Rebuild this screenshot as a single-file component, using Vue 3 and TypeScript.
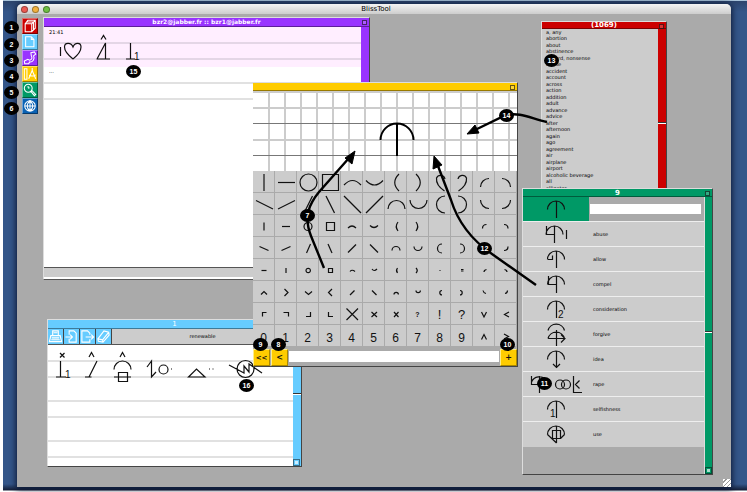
<script setup lang="ts">
interface Key { d?: string; text?: string; size?: string; name: string }
interface Result { word: string; d: string; digit?: string; dx?: number; dy?: number }
interface Badge { n: number; x: number; y: number }

const words: string[] = [
  'a, any', 'abortion', 'about', 'abstinence', 'absurd, nonsense', 'abuse', 'accident', 'account', 'across',
  'action', 'addition', 'adult', 'advance', 'advice', 'after', 'afternoon', 'again', 'ago', 'agreement', 'air',
  'airplane', 'airport', 'alcoholic beverage', 'all', 'alligator',
]

const cap = 'M24.5 12.5A8.5 8.5 0 0 1 41.5 12.5'
const stem = 'M33.5 4V21'
const results: Result[] = [
  { word: 'abuse', d: 'M23 12.5A8.5 8.5 0 0 1 40 12.5M31.5 4V21M23.5 4V12.5H31.5M43.5 8V17' },
  { word: 'allow', d: `${cap}${stem}M25 12.5H29.5V8.5` },
  { word: 'compel', d: `${cap}${stem}M25.5 4V12.5H33.5` },
  { word: 'consideration', d: `${cap}${stem}`, digit: '2', dx: 35, dy: 21 },
  { word: 'forgive', d: 'M25 8.5A8.5 8.5 0 0 1 41.5 8.5M25 16.5A8.5 8.5 0 0 1 41.5 16.5H25M33.5 8V24M38 12.5L42 16.5L38 20.5' },
  { word: 'idea', d: `${cap}${stem}M30 17L33.5 20.5L37 17` },
  { word: 'rape', d: 'M8.5 4V12.5H16.5M8.5 10A8.5 8.5 0 0 1 23 8M16.5 4V21M32.5 12.5a4.5 4.5 0 1 0 9 0a4.5 4.5 0 1 0 -9 0M38.5 12.5a4.5 4.5 0 1 0 9 0a4.5 4.5 0 1 0 -9 0M50.5 4V20.5H59M56.5 8.5L52.5 12.5L56.5 16.5' },
  { word: 'selfishness', d: `${cap}${stem}`, digit: '1', dx: 27, dy: 20 },
  { word: 'use', d: `${cap}${stem}M29.5 8.5H37.5V16.5H29.5ZM24.5 12.5L33.5 21M41.5 12.5L37.5 16.5` },
]

const g = (name: string, d: string): Key => ({ name, d })
const t = (text: string, size = 'mid'): Key => ({ name: text, text, size })
const blank = (name: string): Key => ({ name })

const keys: Key[] = [
  g('vertical', 'M11 3V20'), g('horizontal', 'M3 11.5H20'), g('circle', 'M3 11.5a8.5 8.5 0 1 0 17 0a8.5 8.5 0 1 0 -17 0'),
  g('square', 'M3.5 3.5H19.5V19.5H3.5Z'), g('arch', 'M3 14Q11.5 5 20 14'), g('dip', 'M3 9.5Q11.5 18.5 20 9.5'),
  g('left bow', 'M14 3Q5.5 11.5 14 20'), g('right bow', 'M9 3Q17.5 11.5 9 20'),
  g('left ear', 'M16 8A4.5 4.5 0 0 0 7.5 7C7 12 11 17 15.5 20'), g('right ear', 'M7 8A4.5 4.5 0 0 1 15.5 7C16 12 12 17 7.5 20'),
  g('top left quarter', 'M7.5 16A8.5 8.5 0 0 1 16 7.5'), g('top right quarter', 'M7 7.5A8.5 8.5 0 0 1 15.5 16'),

  g('shallow fall', 'M3 7.5L20 16'), g('shallow rise', 'M3 16L20 7.5'), g('steep rise', 'M7 20L15.5 3'), g('steep fall', 'M7 3L15.5 20'),
  g('fall', 'M3 3L20 20'), g('rise', 'M3 20L20 3'), g('upper half', 'M3 16A8.5 8.5 0 0 1 20 16'), g('lower half', 'M3 7A8.5 8.5 0 0 0 20 7'),
  g('left half', 'M16 3A8.5 8.5 0 0 0 16 20'), g('right half', 'M7 3A8.5 8.5 0 0 1 7 20'),
  g('bottom left quarter', 'M7.5 7A8.5 8.5 0 0 0 16 15.5'), g('bottom right quarter', 'M15.5 7A8.5 8.5 0 0 1 7 15.5'),

  g('half vertical', 'M11 7.5V15.5'), g('half horizontal', 'M7 11.5H15'), g('half circle size', 'M7 11.5a4 4 0 1 0 8 0a4 4 0 1 0 -8 0'),
  g('half square', 'M7.5 7.5H15.5V15.5H7.5Z'), g('half arch', 'M7 13Q11 9 15 13'), g('half dip', 'M7 10.5Q11 14.5 15 10.5'),
  g('half left bow', 'M13 7Q9.5 11.5 13 16'), g('half right bow', 'M9 7Q12.5 11.5 9 16'), blank('spare one'), blank('spare two'),
  g('half top left', 'M9.5 13.5Q9.5 9.5 13.5 9.5'), g('half top right', 'M9 9.5Q13 9.5 13 13.5'),

  g('half shallow fall', 'M6.5 9.5L15.5 13.5'), g('half shallow rise', 'M6.5 13.5L15.5 9.5'), g('half steep rise', 'M9.5 16L13.5 7'),
  g('half steep fall', 'M9 7L13 16'), g('half rise', 'M7 15.5L15 7.5'), g('half fall', 'M7 7.5L15 15.5'),
  g('small upper half', 'M7 13.5A4 4 0 0 1 15 13.5'), g('small lower half', 'M7 9.5A4 4 0 0 0 15 9.5'),
  g('small left half', 'M13 7A4.5 4.5 0 0 0 13 16'), g('small right half', 'M9 7A4.5 4.5 0 0 1 9 16'),
  g('half bottom left', 'M9.5 9.5Q9.5 13.5 13.5 13.5'), g('half bottom right', 'M13 9.5Q13 13.5 9 13.5'),

  g('dash', 'M8.5 11.5H13.5'), g('tick', 'M11 9V14'), g('ring', 'M9 11.5a2.2 2.2 0 1 0 4.4 0a2.2 2.2 0 1 0 -4.4 0'),
  g('box', 'M9.5 9.5H13.5V13.5H9.5Z'), g('tiny arch', 'M9 12.5Q11 10 14 12.5'), g('tiny dip', 'M9 10Q11 13 14 10'),
  g('tiny left bow', 'M12.5 9Q10.5 11.5 12.5 14'), g('tiny right bow', 'M9 9Q11.5 11.5 9 14'), g('dot', 'M10.5 11.5H11.5'),
  g('big dot', 'M10 10.5H12.5M10 12H12.5'), g('tiny top left', 'M11 13Q11 11 13.5 10.5'), g('tiny top right', 'M9.5 10.5Q12 11 12 13'),

  g('caret up', 'M8 13.5L11 10.5L14 13.5'), g('caret right', 'M9.5 8L13 11.5L9.5 15'), g('caret down', 'M8 10.5L11.5 13.5L15 10.5'),
  g('caret left', 'M13 8L9.5 11.5L13 15'), g('tiny rise', 'M9 14L13.5 9.5'), g('tiny fall', 'M9 9.5L13.5 14'),
  g('mini upper half', 'M9 13.5A2.2 2.2 0 0 1 13.4 13.5'), g('mini lower half', 'M9 9.5A2.2 2.2 0 0 0 13.4 9.5'),
  g('mini left half', 'M13 9.5A2.2 2.2 0 0 0 13 13.9'), g('mini right half', 'M9 9.5A2.2 2.2 0 0 1 9 13.9'),
  g('mini bottom left', 'M10 9.5Q10.5 12 13 12.5'), g('mini bottom right', 'M12.5 9.5Q12.5 12 10 12.5'),

  g('corner top left', 'M9.5 13.5V9.5H13.5'), g('corner top right', 'M8.5 9.5H13.5V13.5'), g('corner bottom right', 'M13.5 9V13.5H9'),
  g('corner bottom left', 'M9.5 9V13.5H14'), g('big cross', 'M5.5 5.5L17 17M17 5.5L5.5 17'), g('cross', 'M8.5 9L14 14M14 9L8.5 14'),
  g('small cross', 'M9 9L13.5 14M13.5 9L9 14'), t('?', 'small'), t('!', 'big'), t('?', 'big'), g('v', 'M8.5 9L11 14L13.5 9'), g('less', 'M14 9L9.5 11.5L14 14'),

  ...'0123456789'.split('').map((c) => t(c)), g('up', 'M8.5 14.5L11 9.500L13.5 14.5'), g('greater', 'M9 9L13.5 11.500L9 14'),
]

const badges: Badge[] = [
  { n: 1, x: 12, y: 27 }, { n: 2, x: 12, y: 44 }, { n: 3, x: 12, y: 60 }, { n: 4, x: 12, y: 76 },
  { n: 5, x: 12, y: 92 }, { n: 6, x: 12, y: 108 }, { n: 7, x: 308, y: 215 }, { n: 8, x: 279, y: 344 },
  { n: 9, x: 261, y: 344 }, { n: 10, x: 508, y: 344 }, { n: 11, x: 545, y: 383 }, { n: 12, x: 485, y: 248 },
  { n: 13, x: 552, y: 60 }, { n: 14, x: 507, y: 115 }, { n: 15, x: 134, y: 71 }, { n: 16, x: 247, y: 385 },
]

const columns = Array.from({ length: 16 }, (_, i) => 268 + i * 16)
</script>

<template>
  <div class="desktop">
    <main class="app">
      <header class="bar">
        <span class="lights"><i class="red"></i><i class="amber"></i><i class="lime"></i></span>
        <h1>BlissTool</h1>
      </header>
      <nav class="tools">
        <button class="t-red" aria-label="Dictionary"><svg viewBox="0 0 16 16"><path d="M2.5 5.5H10V14.5H2.500ZM2.5 5.5L5.5 1.500H14V10.500L10 14.5M10 5.5L14 1.5M4 3.5H12V12.500" /></svg></button>
        <button class="t-sky" aria-label="Document"><svg viewBox="0 0 16 16"><path d="M3 2H9.5L12.5 5V13.5H3ZM9.5 2V5H12.5" /></svg></button>
        <button class="t-purple" aria-label="Call"><svg viewBox="0 0 16 16"><path d="M9 2L13 1L14.5 3.5L12 5.5C14 9 11 13 7.500 12.500L6.500 14.5L2 14.500L1.5 11.500L5.5 9.500L7.500 10.500C10 10 11 8 9.500 5.500Z" /></svg></button>
        <button class="t-gold" aria-label="Drawing"><svg viewBox="0 0 16 16"><path d="M1.500 2H4.5V14H1.5ZM10.500 1V4M10.5 4L6.5 13.5M10.5 4L14.5 13.5M7 9.500Q11 11.500 14.500 9" /></svg></button>
        <button class="t-green" aria-label="Search"><svg viewBox="0 0 16 16"><path d="M1.5 6a4.5 4.5 0 1 0 9 0a4.5 4.5 0 1 0 -9 0M9 9.5L13 14.5L14.5 13L10 8.5M5 4.500Q7.5 4 6.500 6.5" /></svg></button>
        <button class="t-blue" aria-label="Network"><svg viewBox="0 0 16 16"><path d="M2 8a6 6 0 1 0 12 0a6 6 0 1 0 -12 0M2 8H14M8 2V14M8 2Q1.5 8 8 14M8 2Q14.5 8 8 14" /></svg></button>
      </nav>
      <span class="grip"></span>
    </main>

    <section class="win chat">
      <h2>bzr2@jabber.fr :: bzr1@jabber.fr</h2>
      <div class="body">
        <div class="paper">
          <div class="message">
            <time>21:41</time>
            <svg viewBox="44 27 317 40" preserveAspectRatio="xMinYMin slice">
              <path class="rule pink" d="M44 43H361M44 59H361" />
              <path d="M60.5 47V56M73 59C68 55 64.5 51 64.5 47C64.5 42.5 71 42 73 47C75 42 81 42.5 81 47C81 51 78 55 73 59" />
              <path d="M101 39.5L103.5 35.5L106 39.5M97 59L105.5 43V59M96.5 59H110M130.5 43V59M126 59H135" />
              <text x="134" y="60">1</text>
            </svg>
          </div>
          <div class="pending">...</div>
        </div>
        <div class="scroll"></div>
      </div>
      <div class="entry"></div>
      <span class="box"></span>
    </section>

    <section class="win sheet">
      <h2>1</h2>
      <div class="body">
        <div class="paper">
          <div class="commands">
            <button aria-label="Print"><svg viewBox="0 0 16 16"><path d="M5 7V2H11V7M3 7H13L14.5 13.5H1.5ZM4 9.5H12M3.5 11.5H12.5M6 4H10" /></svg></button>
            <button aria-label="Import"><svg viewBox="0 0 16 16"><path d="M5.5 6V2H10.5L13 4.5V14H5.5V10.5M1.5 8.5H9M6.5 6L9 8.5L6.5 11" /></svg></button>
            <button aria-label="Export"><svg viewBox="0 0 16 16"><path d="M10.5 6V4.5L8 2H2V14H10.5V11M6 8.5H14.5M12 6L14.5 8.5L12 11" /></svg></button>
            <button aria-label="Erase"><svg viewBox="0 0 16 16"><path d="M2 10.5L8.500 2L13.5 3.500L14 6.500L7.5 14L2.5 13ZM2 10.5L7 11.5L13.500 3.500M7 11.5L7.5 14" /></svg></button>
            <span>renewable</span>
          </div>
          <svg class="writing" viewBox="48 345 245 121" preserveAspectRatio="xMinYMin slice">
            <path class="rule" d="M48 361H293M48 377H293M48 401H293M48 417H293M48 441H293M48 457H293" />
            <path d="M60 353L64.5 357.5M64.5 353L60 357.5M60.5 361V377M56 377H66M89 357L91.5 352.5L94 357M97 361L89 377M85 377H91.5" />
            <path d="M120 357L122.5 352.5L125 357M114 369.5A8.5 8.5 0 0 1 131 369.5M118.5 372.5H127.5V381.5H118.5ZM114 377H131" />
            <path d="M147 367L151.5 361V377L156 372M159 369.5a4.5 4.5 0 1 0 9 0a4.5 4.5 0 1 0 -9 0M171 369H172M188.5 377L196.5 369L205 377ZM209 369H210M212.5 369H213.5" />
            <path d="M237 369a8.5 8.5 0 1 0 17 0a8.5 8.5 0 1 0 -17 0M229 365L244 373V366L249 372V364L262 373" />
            <text x="65" y="378">1</text>
          </svg>
        </div>
        <div class="scroll"><i></i><span class="size"></span></div>
      </div>
    </section>

    <section class="win list">
      <h2>(1069)</h2>
      <div class="body">
        <ul><li v-for="w in words" :key="w">{{ w }}</li></ul>
        <div class="scroll"><i></i></div>
      </div>
      <span class="box"></span>
    </section>

    <section class="win editor">
      <h2></h2>
      <svg class="canvas" viewBox="253 91 264 80">
        <path v-for="x in columns" :key="x" class="soft" :d="`M${x + 1} 92V171`" />
        <path class="soft" d="M253 92H517M253 108H517M253 140H517" />
        <path class="hard" d="M253 123.5H517M253 155.5H517" />
        <path class="ink" d="M380.5 140A16.5 16.5 0 0 1 413.5 140M397 123V156" />
      </svg>
      <div class="keys">
        <button v-for="(k, i) in keys" :key="i" :class="k.size" :aria-label="k.name">
          <template v-if="k.text">{{ k.text }}</template>
          <svg v-else-if="k.d" viewBox="0 0 22 22"><path :d="k.d" /></svg>
        </button>
      </div>
      <div class="command">
        <button>&lt;&lt;</button><button>&lt;</button>
        <input type="text" aria-label="Symbol name" />
        <button>+</button>
      </div>
      <span class="box"></span>
    </section>

    <section class="win found">
      <h2>9</h2>
      <div class="body">
        <div class="results">
          <div class="query">
            <div class="current"><svg viewBox="0 0 68 25"><path :d="cap + stem" /></svg></div>
            <input type="text" aria-label="Search word" />
          </div>
          <ul>
            <li v-for="r in results" :key="r.word">
              <svg viewBox="0 0 68 25"><path :d="r.d" /><text v-if="r.digit" :x="r.dx" :y="r.dy">{{ r.digit }}</text></svg>
              <span>{{ r.word }}</span>
            </li>
          </ul>
        </div>
        <div class="scroll"><i></i><span class="size"></span></div>
      </div>
      <span class="box"></span>
    </section>

    <svg class="arrows" aria-hidden="true">
      <path d="M324 268L311 236C303 216 310 203 319 192L349 158" />
      <path d="M536 285L492 254C466 236 456 216 451 200L438 166" />
      <path d="M547 122C530 118 520 112 506 115L475 130" />
      <path class="head" d="M355 151L345 158L352 164ZM434 156L433 169L442 165ZM467 134L475 125L479 133Z" />
    </svg>
    <span v-for="b in badges" :key="b.n" class="badge" :style="{ left: b.x + 'px', top: b.y + 'px' }">{{ b.n }}</span>
  </div>
</template>

<style>
body { margin: 0; background: #fff; }
</style>

<style scoped>
* { box-sizing: border-box; }
.desktop {
  position: relative; height: 100vh; overflow: hidden; padding: 4px 16px 5px 17px; font: 5px/6px "DejaVu Sans", sans-serif; color: #000;
  background: linear-gradient(90deg, #fff 3px, transparent 3px), linear-gradient(#a9c4da 1px, #2c446c 1px, #345689 12px, #345689 calc(100% - 8px), #141f38 calc(100% - 2px), #fff calc(100% - 1px));
}
button { padding: 0; margin: 0; border: 0; font: inherit; color: inherit; display: block; }
input { padding: 0 2px; border: 0; background: #fff; font: inherit; min-width: 0; border-radius: 0; }
ul { list-style: none; margin: 0; padding: 0; }
h1, h2 { margin: 0; }
svg { display: block; }
path { fill: none; stroke: #111; stroke-width: 1.2; }
svg text { font: 10px "Liberation Sans", sans-serif; fill: #111; }

.app { height: 100%; background: #aaa; border-radius: 5px 5px 0 0; box-shadow: 0 1px 6px 1px #0a1530; position: relative; overflow: hidden; }
.bar { height: 10px; display: flex; align-items: center; background: linear-gradient(#f4f4f4, #cdcdcd); }
.lights { display: flex; gap: 4px; padding-left: 4px; flex: 1; }
.lights i { width: 7px; height: 7px; border-radius: 50%; border: 1px solid #0005; }
.red { background: #ec5a52; }
.amber { background: #f2b13f; }
.lime { background: #6fc043; }
.bar::after { content: ""; flex: 1; }
.bar h1 { font: 7px/10px "DejaVu Sans", sans-serif; color: #000; }
.tools { width: 16px; margin: 4px 0 0 5px; }
.tools button { width: 16px; height: 16px; border: 1px solid; border-color: #fff6 #0006 #0006 #fff6; }
.tools svg { width: 14px; height: 14px; }
.tools path, .commands path { stroke: #fff; }
.t-red { background: #c00; }
.t-sky { background: #6cf; }
.t-purple { background: #93f; }
.t-gold { background: #fc0; }
.t-green { background: #096; }
.t-blue { background: #0a62b4; }
.grip { position: absolute; right: 0; bottom: 0; width: 8px; height: 8px; background: repeating-linear-gradient(135deg, #fff 0 2px, #999 2px 3px); }

.win { position: absolute; display: flex; flex-direction: column; border: 1px solid; border-color: #ddd #444 #444 #ddd; overflow: hidden; }
.win h2 { flex: none; height: 8px; font: bold 7px/8px "DejaVu Sans", sans-serif; color: #fff; text-align: center; background: var(--hue); border-bottom: 1px solid #0006; }
.win .body { flex: 1; display: flex; min-height: 0; }
.paper { flex: 1; background: #fff; min-width: 0; }
.scroll { position: relative; flex: none; width: 8px; background: var(--hue); display: flex; flex-direction: column; }
.scroll i { height: 2px; background: #fff; border-top: 1px solid #333; }
.size { position: absolute; bottom: 0; left: 0; width: 7px; height: 7px; border: 1px solid #0007; background: radial-gradient(#fffa 40%, transparent 45%); }
.box { position: absolute; right: 2px; top: 2px; width: 5px; height: 5px; border: 1px solid #0009; background: #fff3; }
.rule { stroke: #e1e1e1; stroke-width: 2; }
.rule.pink { stroke: #e4d6e6; }

.chat { --hue: #93f; left: 43px; top: 17px; width: 327px; height: 263px; border-bottom-color: #555; }
.chat h2 { font-size: 6px; height: 9px; }
.chat .paper { background: linear-gradient(#e1e1e1 2px, transparent 2px) 0 55px / 100% 300px no-repeat, linear-gradient(#e1e1e1 2px, transparent 2px) 0 71px / 100% 300px no-repeat, #fff; }
.message { position: relative; height: 40px; background: #fef; }
.message svg { width: 100%; height: 40px; }
.message time { position: absolute; left: 5px; top: 2px; }
.pending { padding: 1px 5px; }
.entry { flex: none; height: 12px; border-top: 1px solid #555; border-bottom: 2px solid #fff; background: #ccc; }

.sheet { --hue: #6cf; left: 47px; top: 319px; width: 255px; height: 148px; }
.sheet h2 { height: 9px; font-weight: normal; }
.commands { display: flex; height: 16px; background: #ccc; border-bottom: 1px solid #555; }
.commands button { width: 16px; background: #6cf; border-right: 1px solid #444; }
.commands svg { width: 15px; height: 15px; }
.commands span { flex: 1; text-align: center; line-height: 14px; }
.writing { width: 100%; height: 121px; }
.sheet .scroll i { margin-top: 64px; }

.list { --hue: #c00; left: 541px; top: 21px; width: 126px; height: 180px; }
.list h2 { height: 7px; line-height: 7px; }
.list ul { flex: 1; height: 162px; display: grid; grid-template-rows: repeat(25, 1fr); background: #ccc; padding-left: 4px; }
.list li { line-height: 7px; height: 6px; }
.list .scroll i { margin-top: 93px; }

.editor { --hue: #fc0; left: 253px; top: 82px; width: 265px; height: 285px; border-left: 0; background: #aaa; }
.canvas { width: 100%; height: 80px; background: #fff; }
.soft { stroke: #ccc; stroke-width: 2; }
.hard { stroke: #777; stroke-width: 1; }
.ink { stroke: #000; stroke-width: 2; }
.keys { display: grid; grid-template-columns: repeat(12, 1fr); grid-auto-rows: 22px; }
.keys button { background: #ccc; border-right: 1px solid #aaa; border-bottom: 1px solid #aaa; color: #111; overflow: hidden; }
.keys svg { width: 22px; height: 22px; }
.keys .mid { font: 12px/16px "Liberation Sans", sans-serif; padding-top: 4px; }
.keys .small { font: bold 7px/16px "Liberation Sans", sans-serif; padding-top: 2px; }
.keys .big { font: 13px/16px "Liberation Sans", sans-serif; padding-top: 2px; }
.command { display: flex; gap: 1px; padding-top: 2px; }
.command button { width: 17px; height: 17px; background: #fc0; border: 1px solid; border-color: #fe8 #a80 #a80 #fe8; font: bold 8px/14px "DejaVu Sans", sans-serif; color: #111; }
.command button:first-child { font-size: 7px; }
.command input { flex: 1; height: 11px; margin: 2px 0 0 0; }

.found { --hue: #096; left: 522px; top: 188px; width: 191px; height: 287px; }
.results { flex: 1; background: #aaa; }
.query { display: flex; height: 25px; padding-right: 3px; border-bottom: 1px solid #eee; }
.current { width: 66px; background: #096; overflow: hidden; }
.query input { flex: 1; height: 10px; margin: 7px 0 0 1px; }
.results svg { width: 68px; height: 25px; flex: none; }
.results li { display: flex; height: 25px; background: #ccc; border-bottom: 1px solid #eee; line-height: 24px; }
.results li:last-child { border-bottom: 0; }
.results li span { padding-left: 2px; }
.found .scroll { border-left: 1px solid #ddd; }
.found .scroll i { margin-top: 134px; }

.arrows { position: absolute; left: 0; top: 0; width: 100%; height: 100%; pointer-events: none; }
.arrows path { stroke: #000; stroke-width: 2.4; }
.arrows .head { fill: #000; stroke-width: 1; }
.badge { position: absolute; width: 15px; height: 13px; margin: -6px 0 0 -8px; border-radius: 50%; background: #000; color: #fff; font: bold 7px/13px "Liberation Sans", sans-serif; text-align: center; }
</style>
